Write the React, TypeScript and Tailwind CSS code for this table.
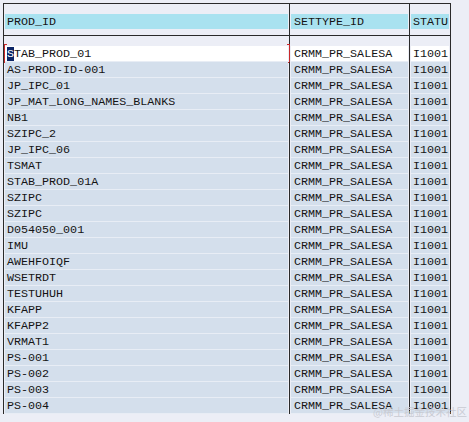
const rows: string[] = [
  "STAB_PROD_01",
  "AS-PROD-ID-001",
  "JP_IPC_01",
  "JP_MAT_LONG_NAMES_BLANKS",
  "NB1",
  "SZIPC_2",
  "JP_IPC_06",
  "TSMAT",
  "STAB_PROD_01A",
  "SZIPC",
  "SZIPC",
  "D054050_001",
  "IMU",
  "AWEHFOIQF",
  "WSETRDT",
  "TESTUHUH",
  "KFAPP",
  "KFAPP2",
  "VRMAT1",
  "PS-001",
  "PS-002",
  "PS-003",
  "PS-004",
];

export default function App() {
  return (
    <div className="relative w-[469px] h-[422px] bg-[#eceef6] pt-[3px] pl-[3px] font-['Liberation_Mono','Courier_New',monospace] text-[11.7px] leading-[16px] text-[#141414] overflow-hidden">
      <div className="w-[448px] border-l border-t border-[#2a2a2a]">
        {/* Header */}
        <div className="flex h-[32px] border-b border-[#2a2a2a]">
          <div className="w-[286px] border-r border-[#2a2a2a] pt-[10px] px-[1px]">
            <div className="h-[15px] bg-[#a9e2f0] pl-[2px] pt-[2px] leading-[13px]">PROD_ID</div>
          </div>
          <div className="w-[120px] border-r border-[#2a2a2a] pt-[10px] px-[1px]">
            <div className="h-[15px] bg-[#a9e2f0] pl-[3px] pt-[2px] leading-[13px]">SETTYPE_ID</div>
          </div>
          <div className="w-[41px] border-r border-[#2a2a2a] pt-[10px] px-[1px]">
            <div className="h-[15px] bg-[#a9e2f0] pl-[2px] pt-[2px] leading-[13px] overflow-hidden whitespace-nowrap">STATU</div>
          </div>
        </div>

        {/* Spacer */}
        <div className="flex h-[10px]">
          <div className="w-[286px] border-r border-[#2a2a2a]" />
          <div className="w-[120px] border-r border-[#2a2a2a]" />
          <div className="w-[41px] border-r border-[#2a2a2a]" />
        </div>

        {/* Data rows */}
        {rows.map((id, i) => {
          const first = i === 0;
          const bg = first ? "bg-white" : "bg-[#d4dfec]";
          return (
            <div key={i} className="flex h-[16px]">
              <div className="relative w-[286px] border-r border-[#2a2a2a] px-[1px]">
                <div className={`h-[15px] ${bg} pl-[2px] pt-[1px] leading-[14px] whitespace-nowrap`}>
                  {first ? (
                    <>
                      <span className="bg-[#0c2566] text-white">S</span>
                      {id.slice(1)}
                    </>
                  ) : (
                    id
                  )}
                </div>
                <div className="h-[1px] bg-[#e8edf5]" />
                {first && (
                  <>
                    <span className="absolute left-0 top-[-2px] w-[3px] h-[19px] border-l border-t border-b border-[#c8282a]" />
                    <span className="absolute right-[-1px] top-[-2px] w-[3px] h-[19px] border-r border-t border-b border-[#c8282a]" />
                  </>
                )}
              </div>
              <div className="w-[120px] border-r border-[#2a2a2a] px-[1px]">
                <div className={`h-[15px] ${bg} pl-[3px] pt-[1px] leading-[14px] whitespace-nowrap`}>CRMM_PR_SALESA</div>
                <div className="h-[1px] bg-[#e8edf5]" />
              </div>
              <div className="w-[41px] border-r border-[#2a2a2a] px-[1px]">
                <div className={`h-[15px] ${bg} pl-[2px] pt-[1px] leading-[14px] whitespace-nowrap overflow-hidden`}>I1001</div>
                <div className="h-[1px] bg-[#e8edf5]" />
              </div>
            </div>
          );
        })}
      </div>

      {/* watermark */}
      <div className="absolute right-[2px] bottom-[4px] font-['Noto_Sans_CJK_SC','Noto_Sans',sans-serif] text-[10.5px] leading-[13px] text-[#c9cbd3]">
        @稀土掘金技术社区
      </div>
    </div>
  );
}
